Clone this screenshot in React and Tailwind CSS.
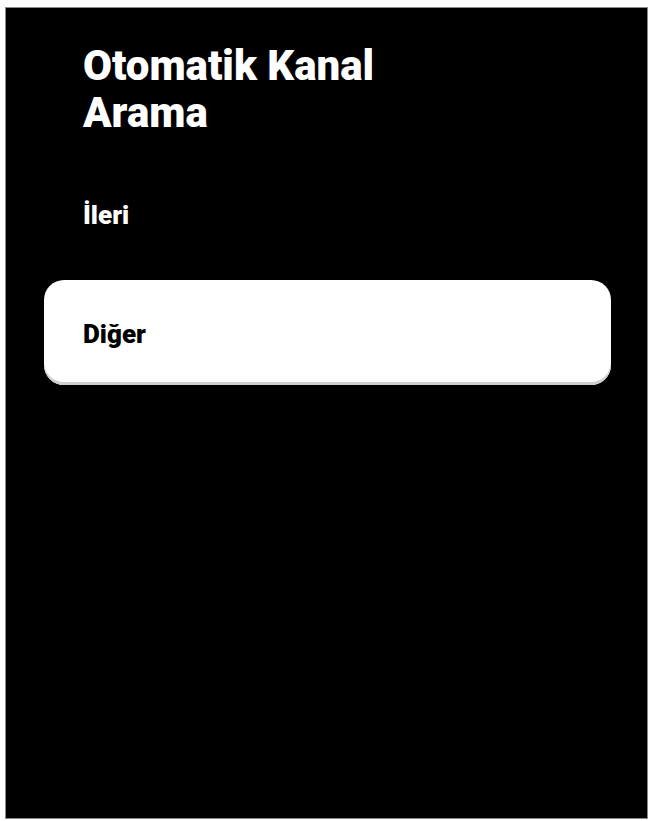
import React from "react";

export default function App() {
  return (
    <div className="w-[650px] h-[821px] bg-white pl-[5px] pt-[7px] pr-[2px] pb-[2px] font-['Roboto',sans-serif]">
      <div className="w-full h-full bg-black border border-[#8a8a8a] flex flex-col">
        <div className="pl-[77px] pt-[34px]">
          <h1 className="text-white font-black text-[42px] leading-[47px] tracking-[0px]">
            Otomatik Kanal
            <br />
            Arama
          </h1>
          <div className="mt-[63px] text-white font-black text-[26px] leading-[32px]">İleri</div>
        </div>
        <div className="mt-[49px] ml-[38px] mr-[36px] h-[105px] rounded-[20px] bg-white flex items-center pl-[39px] shadow-[inset_0_-3px_0_#cfcfcf]">
          <span className="text-black font-black text-[26px] leading-[32px] pt-[2px]">Diğer</span>
        </div>
      </div>
    </div>
  );
}
